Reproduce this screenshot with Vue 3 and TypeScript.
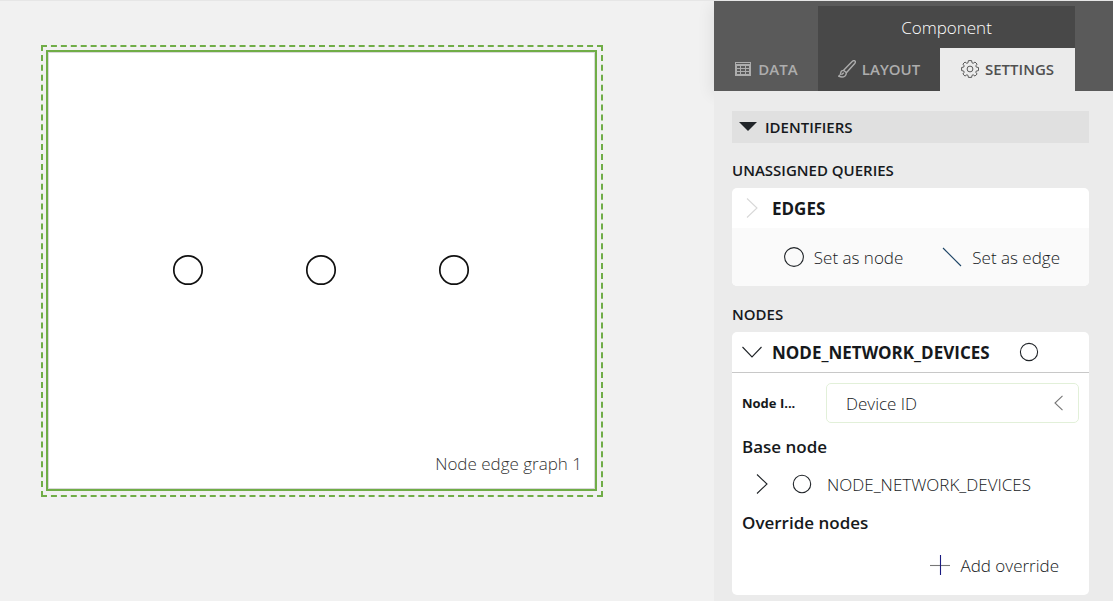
<script setup lang="ts">
import { ref } from 'vue'

const nodes: number[] = [1, 2, 3]
const identifiersOpen = ref(true)
const identifier = ref('Device ID')
</script>

<template>
  <div class="app">
    <main class="canvas">
      <div class="selection">
        <section class="graph">
          <div class="graph-nodes">
            <svg v-for="n in nodes" :key="n" class="graph-node" viewBox="0 0 32 32">
              <circle cx="16" cy="16" r="14.200" />
            </svg>
          </div>
          <p class="graph-title">Node edge graph 1</p>
        </section>
      </div>
    </main>

    <aside class="panel">
      <header class="panel-head">
        <div class="group-title">Component</div>
        <button type="button" class="tab data">
          <svg class="tab-icon" viewBox="0 0 18 18">
            <path class="solid" fill-rule="evenodd" d="M1 2h16v14H1zM2 3v1h14V3zM3 6v2h3V6zM7 6v2h4V6zM12 6v2h3V6zM3 9v2h3V9zM7 9v2h4V9zM12 9v2h3V9zM3 12v2h3v-2zM7 12v2h4v-2zM12 12v2h3v-2z" />
          </svg>
          DATA
        </button>
        <button type="button" class="tab layout">
          <svg class="tab-icon" viewBox="0 0 18 18">
            <path class="line" d="M5.600 10.200 14.400 1.300Q16 .1 17 1Q17.900 2 16.700 3.500L8.400 12.700zM5.400 10.400Q2.800 10.600 2.700 13Q2.500 15.400.6 16.200Q4.600 18 7 16Q8.600 14.600 8.200 12.900M3.400 14.700 5.800 12.700" />
          </svg>
          LAYOUT
        </button>
        <button type="button" class="tab settings">
          <svg class="tab-icon" viewBox="0 0 18 18">
            <path class="gear" d="M7.400.6h3.200l.4 2.200 1.200.5L14 2l2.100 2.100-1.300 1.800.5 1.200 2.200.4v3.100l-2.200.4-.5 1.200 1.300 1.800L14 16.100l-1.800-1.300-1.200.5-.4 2.100H7.400L7 15.300l-1.200-.5L4 16.100 1.900 14l1.300-1.800-.5-1.200-2.100-.4V7.500l2.100-.4.5-1.200L1.900 4.100 4 2l1.800 1.300L7 2.800z" />
            <circle class="gear" cx="9" cy="9" r="2.900" />
          </svg>
          SETTINGS
        </button>
      </header>

      <div class="panel-body">
        <button type="button" class="section-bar" :aria-expanded="identifiersOpen" @click="identifiersOpen = !identifiersOpen">
          <svg class="caret" viewBox="0 0 18 10"><path d="M0 0h18L9 9z" /></svg>
          IDENTIFIERS
        </button>

        <template v-if="identifiersOpen">
          <h2 class="heading">UNASSIGNED QUERIES</h2>
          <section class="card">
            <div class="card-head">
              <svg class="icon pale" viewBox="0 0 20 20"><path d="M5 .5 15 10 5 19.500" /></svg>
              <h3 class="card-title">EDGES</h3>
            </div>
            <div class="actions">
              <button type="button" class="action">
                <svg class="icon" viewBox="0 0 20 20"><circle cx="10" cy="10" r="9.400" /></svg>
                Set as node
              </button>
              <button type="button" class="action">
                <svg class="icon blue" viewBox="0 0 20 20"><path d="M1 1 19 19" /></svg>
                Set as edge
              </button>
            </div>
          </section>

          <h2 class="heading">NODES</h2>
          <section class="card">
            <div class="card-head ruled">
              <svg class="icon" viewBox="0 0 20 20"><path d="M.5 5 10 15 19.500 5" /></svg>
              <h3 class="card-title wide">NODE_NETWORK_DEVICES</h3>
              <svg class="icon" viewBox="0 0 20 20"><circle cx="10" cy="10" r="8.600" /></svg>
            </div>
            <div class="card-body">
              <div class="field">
                <label class="field-label" for="node-identifier">Node I...</label>
                <div class="select-box">
                  <select id="node-identifier" v-model="identifier" class="select">
                    <option>Device ID</option>
                  </select>
                  <svg class="select-arrow" viewBox="0 0 10 16"><path d="M8.500 .8 1 8l7.500 7.200" /></svg>
                </div>
              </div>
              <h4 class="sub">Base node</h4>
              <button type="button" class="base-row">
                <svg class="icon" viewBox="0 0 20 20"><path d="M5 .5 15 10 5 19.500" /></svg>
                <svg class="icon ring" viewBox="0 0 20 20"><circle cx="10" cy="10" r="8.700" /></svg>
                NODE_NETWORK_DEVICES
              </button>
              <h4 class="sub">Override nodes</h4>
              <div class="add-row">
                <button type="button" class="action">
                  <svg class="icon" viewBox="0 0 20 20"><path class="plus-h" d="M0 10.500H20" /><path class="plus-v" d="M10.500 0V20" /></svg>
                  Add override
                </button>
              </div>
            </div>
          </section>
        </template>
      </div>
    </aside>
  </div>
</template>

<style>
body {
  margin: 0;
  background: #f1f1f1;
}
</style>

<style scoped>
.app {
  display: flex;
  min-height: 100vh;
  box-sizing: border-box;
  border-top: 1px solid #e6e6e6;
  overflow: hidden;
  background: #f1f1f1;
  color: #16191c;
  font-family: "Open Sans", "Noto Sans", sans-serif;
  font-size: 17px;
  font-weight: 300;
}
button {
  margin: 0;
  padding: 0;
  border: 0;
  background: none;
  color: inherit;
  font: inherit;
  cursor: pointer;
}
h2, h3, h4, p {
  margin: 0;
}
.canvas {
  flex: 1;
  min-width: 0;
  padding: 44px 111px 44px 41px;
}
.selection {
  box-sizing: border-box;
  border: 2px dashed #70ad47;
  padding: 3px 4px 4px 3px;
}
.graph {
  display: flex;
  flex-direction: column;
  box-sizing: border-box;
  aspect-ratio: 551 / 441;
  border: 2px solid #70ad47;
  background: #fff;
  box-shadow: inset 0 0 0 1px #d9d9d9;
}
.graph-nodes {
  flex: 1;
  display: flex;
  align-items: center;
  justify-content: center;
  gap: 101px;
  padding: 35px 1px 0 0;
}
.graph-node {
  width: 32px;
  height: 32px;
  fill: none;
  stroke: #111;
  stroke-width: 1.7;
}
.graph-title {
  padding: 0 13px 13px;
  color: #333;
  text-align: right;
  line-height: 24px;
}
.panel {
  flex: 0 0 399px;
  display: flex;
  flex-direction: column;
}
.panel-head {
  display: grid;
  grid-template-columns: 104px 122px 135px 1fr;
  grid-template-rows: 42px 43px;
  padding-top: 5px;
  background: #5a5a5a;
  box-shadow: -3px 4px 14px rgba(0, 0, 0, 0.07);
}
.group-title {
  grid-column: 2 / 4;
  display: grid;
  place-items: center;
  background: #484848;
  color: #fff;
}
.tab {
  grid-row: 2;
  display: flex;
  align-items: center;
  justify-content: center;
  gap: 6px;
  padding-bottom: 2px;
  color: #adadad;
  font-size: 15px;
  font-weight: 600;
}
.tab.layout {
  background: #484848;
}
.tab.settings {
  background: #ebebeb;
  color: #505050;
}
.tab-icon {
  width: 18px;
  height: 18px;
  fill: none;
  stroke: none;
}
.solid {
  fill: #adadad;
}
.line {
  stroke: #adadad;
  stroke-width: 1.4;
}
.gear {
  stroke: #5a5a5a;
  stroke-width: 1;
  stroke-linejoin: round;
}
.panel-body {
  position: relative;
  flex: 1;
  padding: 20px 24px 5px 18px;
  background: #ebebeb;
}
.section-bar {
  display: flex;
  align-items: center;
  gap: 8px;
  width: 100%;
  height: 32px;
  padding: 0 7px;
  background: #e0e0e0;
  font-size: 15px;
  font-weight: 600;
}
.caret {
  width: 18px;
  height: 10px;
  fill: #212529;
}
.heading {
  padding: 18px 0 8px;
  font-size: 15px;
  font-weight: 600;
  line-height: 19px;
}
.card {
  margin-bottom: 1px;
  border-radius: 5px;
  background: #fff;
  overflow: hidden;
}
.card-head {
  display: flex;
  align-items: center;
  gap: 10px;
  height: 40px;
  padding: 0 10px;
}
.card-head.ruled {
  border-bottom: 1px solid #c8c8c8;
}
.card-title {
  font-size: 17px;
  font-weight: 700;
}
.card-title.wide {
  width: 237px;
}
.icon {
  flex: none;
  width: 20px;
  height: 20px;
  fill: none;
  stroke: #212529;
  stroke-width: 1.1;
}
.icon.pale {
  stroke: #d8d8d8;
}
.icon.blue {
  stroke: #1d4466;
}
.plus-h {
  stroke: #777;
}
.plus-v {
  stroke: #1a1a80;
}
.actions {
  display: flex;
  align-items: center;
  justify-content: flex-end;
  gap: 39px;
  height: 58px;
  padding-right: 29px;
  background: #fafafa;
}
.action {
  display: flex;
  align-items: center;
  gap: 10px;
}
.card-body {
  padding: 10px;
}
.field {
  display: flex;
  align-items: center;
}
.field-label {
  flex: 0 0 84px;
  font-size: 13px;
  font-weight: 700;
}
.select-box {
  position: relative;
  flex: 1;
}
.select {
  display: block;
  appearance: none;
  box-sizing: border-box;
  width: 100%;
  height: 40px;
  padding: 0 36px 0 19px;
  border: 1px solid #e2f0d9;
  border-radius: 5px;
  background: #fff;
  color: inherit;
  font: inherit;
}
.select-arrow {
  position: absolute;
  top: 12px;
  right: 15px;
  width: 10px;
  height: 16px;
  fill: none;
  stroke: #777;
  stroke-width: 1.1;
  pointer-events: none;
}
.sub {
  padding: 12px 0 10px;
  font-size: 17px;
  font-weight: 600;
  line-height: 24px;
}
.base-row {
  display: flex;
  align-items: center;
  gap: 15px;
  height: 30px;
  padding-left: 10px;
}
.ring {
  margin-left: 5px;
}
.add-row {
  display: flex;
  justify-content: flex-end;
  height: 40px;
  padding-right: 20px;
}
</style>
